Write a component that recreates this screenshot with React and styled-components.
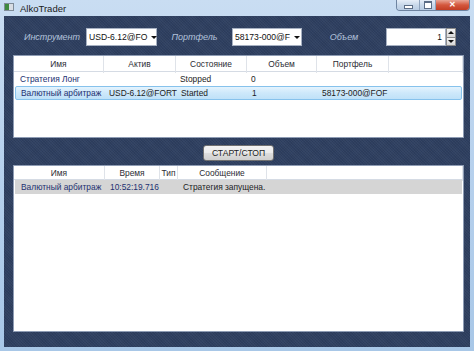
import React from 'react'
import styled, { createGlobalStyle } from 'styled-components'

const GlobalStyle = createGlobalStyle`
  html, body {
    margin: 0;
    padding: 0;
    background: #b4cfea;
  }
  body {
    font-family: "Liberation Sans", Arial, sans-serif;
    font-size: 8.4px;
  }
`;

const Window = styled.div`
  width: 474px;
  height: 351px;
  box-sizing: border-box;
  display: flex;
  flex-direction: column;
  padding: 0 4px 4px 4px;
  background: linear-gradient(180deg, #c9ddf2 0%, #b7d1ed 45%, #a8c7e7 100%);
  overflow: hidden;
`;

const TitleBar = styled.div`
  height: 16px;
  display: flex;
  align-items: flex-start;
`;

const AppIcon = styled.div`
  width: 10px;
  height: 8px;
  margin: 3px 6px 0 0;
  background: linear-gradient(90deg, #3f8a3f 0 4px, #d8dde4 4px);
  border: 1px solid #7f8c99;
  box-sizing: border-box;
`;

const Title = styled.span`
  margin-top: 3px;
  font-size: 9.5px;
  color: #1b1b1b;
`;

const WinButtons = styled.div`
  margin-left: auto;
  display: flex;
  height: 10px;
  border: 1px solid #6e84a0;
  border-top: none;
  border-radius: 0 0 4px 4px;
  overflow: hidden;
`;

const WinButton = styled.div`
  width: ${p => p.$w}px;
  display: flex;
  align-items: center;
  justify-content: center;
  background: ${p => p.$close
    ? 'linear-gradient(180deg, #e8a494 0%, #d4573d 50%, #c23d24 100%)'
    : 'linear-gradient(180deg, #e6eef8 0%, #c8d8ea 50%, #b7cbe2 100%)'};
  border-right: ${p => p.$close ? 'none' : '1px solid #8ea3bd'};
  color: #fff;
  font-size: 8px;
  font-weight: bold;
  line-height: 1;
`;

const MinGlyph = styled.span`
  width: 7px;
  height: 2px;
  margin-top: 3px;
  background: #fff;
  border: 1px solid #5b6d86;
`;

const MaxGlyph = styled.span`
  width: 6px;
  height: 5px;
  border: 1px solid #5b6d86;
  border-top-width: 2px;
  background: #fff;
`;

const Client = styled.div`
  flex: 1;
  display: flex;
  flex-direction: column;
  padding: 12px 6px 15px 9px;
  background-color: #2e3f60;
  background-image:
    repeating-linear-gradient(45deg, rgba(255,255,255,0.035) 0 1px, transparent 1px 2px),
    repeating-linear-gradient(-45deg, rgba(0,0,0,0.05) 0 1px, transparent 1px 2px);
`;

const Toolbar = styled.div`
  display: grid;
  grid-template-columns: 68px 71px 75px 70px 84px 70px;
  align-items: center;
  height: 18px;
  margin-left: 5px;
`;

const FieldLabel = styled.span`
  text-align: center;
  font-style: italic;
  font-size: 9px;
  color: #b2c2db;
`;

const Combo = styled.div`
  height: 18px;
  box-sizing: border-box;
  display: flex;
  align-items: center;
  background: #fff;
  border: 1px solid #a7b1c2;
  padding: 0 4px 0 2px;
  color: #111;
  font-size: 8.6px;
`;

const ComboText = styled.span`
  flex: 1;
  white-space: nowrap;
`;

const Arrow = styled.span`
  width: 0;
  height: 0;
  margin-left: 4px;
  border-left: 3px solid transparent;
  border-right: 3px solid transparent;
  border-${p => p.$up ? 'bottom' : 'top'}: 3px solid #111;
`;

const Numeric = styled.div`
  height: 18px;
  display: flex;
`;

const NumericBox = styled.div`
  flex: 1;
  background: #fff;
  border: 1px solid #a7b1c2;
  text-align: right;
  padding-right: 3px;
  line-height: 16px;
  color: #111;
`;

const Spinner = styled.div`
  width: 10px;
  display: flex;
  flex-direction: column;
`;

const SpinButton = styled.div`
  flex: 1;
  display: flex;
  align-items: center;
  justify-content: center;
  background: linear-gradient(180deg, #f4f4f4, #d8d8d8);
  border: 1px solid #8c8c8c;
  margin-top: ${p => p.$down ? '-1px' : '0'};

  ${Arrow} {
    margin: 0;
  }
`;

const Grid = styled.div`
  display: flex;
  flex-direction: column;
  background: #fff;
  border: 1px solid #8e9cb4;
  ${p => p.$grow ? 'flex: 1;' : `height: ${p.$h}px;`}
  box-sizing: border-box;
  margin-top: ${p => p.$mt}px;
  overflow: hidden;
`;

const HeaderRow = styled.div`
  display: grid;
  grid-template-columns: ${p => p.$cols};
  height: ${p => p.$h}px;
  border-bottom: 1px solid #d5dbe4;
  flex-shrink: 0;
`;

const HeaderCell = styled.div`
  border-right: 1px solid #dfe3e9;
  text-align: center;
  line-height: ${p => p.$h + 2}px;
  color: #2c2c34;
  white-space: nowrap;
`;

const Row = styled.div`
  display: grid;
  grid-template-columns: ${p => p.$cols};
  height: 14px;
  box-sizing: border-box;
  align-items: center;
  margin: 0 ${p => p.$selected || p.$grey ? 1 : 0}px;
  border: 1px solid transparent;
  ${p => p.$selected && `
    background: linear-gradient(180deg, #e4f3fd 0%, #cde8fa 50%, #bfe1f8 100%);
    border-color: #86c2ec;
    border-radius: 2px;
  `}
  ${p => p.$grey && `
    background: #d5d5d5;
    border-color: #d5d5d5;
  `}
`;

const Cell = styled.div`
  padding-left: ${p => p.$first ? 5 : 3}px;
  color: ${p => p.$blue ? '#233171' : '#1c1c24'};
  white-space: nowrap;
`;

const ButtonRow = styled.div`
  display: flex;
  justify-content: center;
  margin-top: 7px;
`;

const Button = styled.button`
  width: 71px;
  height: 16px;
  padding: 0;
  font-family: "Liberation Sans", Arial, sans-serif;
  font-size: 8.6px;
  color: #1c1c1c;
  background: linear-gradient(180deg, #f3f3f3 0%, #ebebeb 50%, #dddddd 51%, #cfcfcf 100%);
  border: 1px solid #707070;
  border-radius: 3px;
`;

const strategyCols = '90px 72px 71px 70px 72px 1fr';
const logCols = '91px 55px 18px 89px 1fr';

const strategies = [
  { name: 'Стратегия Лонг', asset: '', state: 'Stopped', volume: '0', portfolio: '' },
  { name: 'Валютный арбитраж', asset: 'USD-6.12@FORT', state: 'Started', volume: '1', portfolio: '58173-000@FOF', selected: true },
];

export default function App() {
  return (
    <Window>
      <GlobalStyle />
      <TitleBar>
        <AppIcon />
        <Title>AlkoTrader</Title>
        <WinButtons>
          <WinButton $w={22}><MinGlyph /></WinButton>
          <WinButton $w={15}><MaxGlyph /></WinButton>
          <WinButton $w={33} $close>✕</WinButton>
        </WinButtons>
      </TitleBar>
      <Client>
        <Toolbar>
          <FieldLabel>Инструмент</FieldLabel>
          <Combo>
            <ComboText>USD-6.12@FO</ComboText>
            <Arrow />
          </Combo>
          <FieldLabel>Портфель</FieldLabel>
          <Combo>
            <ComboText>58173-000@F</ComboText>
            <Arrow />
          </Combo>
          <FieldLabel>Объем</FieldLabel>
          <Numeric>
            <NumericBox>1</NumericBox>
            <Spinner>
              <SpinButton><Arrow $up /></SpinButton>
              <SpinButton $down><Arrow /></SpinButton>
            </Spinner>
          </Numeric>
        </Toolbar>

        <Grid $h={83} $mt={9}>
          <HeaderRow $cols={strategyCols} $h={15}>
            <HeaderCell $h={15}>Имя</HeaderCell>
            <HeaderCell $h={15}>Актив</HeaderCell>
            <HeaderCell $h={15}>Состояние</HeaderCell>
            <HeaderCell $h={15}>Объем</HeaderCell>
            <HeaderCell $h={15}>Портфель</HeaderCell>
            <HeaderCell $h={15} />
          </HeaderRow>
          {strategies.map(s => (
            <Row key={s.name} $cols={strategyCols} $selected={s.selected}>
              <Cell $first $blue>{s.name}</Cell>
              <Cell>{s.asset}</Cell>
              <Cell>{s.state}</Cell>
              <Cell>{s.volume}</Cell>
              <Cell>{s.portfolio}</Cell>
              <Cell />
            </Row>
          ))}
        </Grid>

        <ButtonRow>
          <Button>СТАРТ/СТОП</Button>
        </ButtonRow>

        <Grid $grow $mt={4}>
          <HeaderRow $cols={logCols} $h={13}>
            <HeaderCell $h={13}>Имя</HeaderCell>
            <HeaderCell $h={13}>Время</HeaderCell>
            <HeaderCell $h={13}>Тип</HeaderCell>
            <HeaderCell $h={13}>Сообщение</HeaderCell>
            <HeaderCell $h={13} />
          </HeaderRow>
          <Row $cols={logCols} $grey>
            <Cell $first $blue>Валютный арбитраж</Cell>
            <Cell $blue>10:52:19.716</Cell>
            <Cell />
            <Cell>Стратегия запущена.</Cell>
            <Cell />
          </Row>
        </Grid>
      </Client>
    </Window>
  )
}
